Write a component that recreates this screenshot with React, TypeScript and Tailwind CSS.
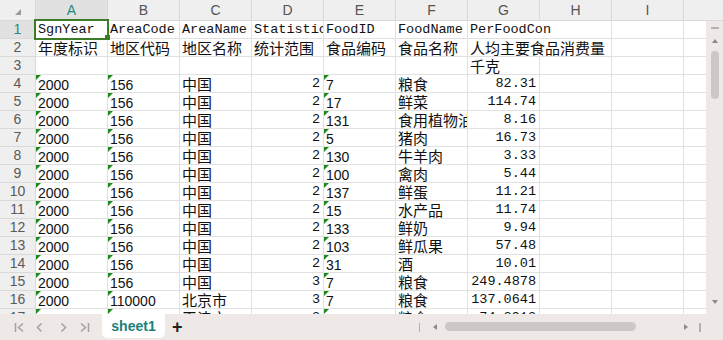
import React from 'react';

type K = 'm' | 's' | 'c';
type C = { t?: string; k?: K; r?: boolean; tri?: boolean; ov?: boolean };

const MONO = "font-['Liberation_Mono',monospace] text-[13.5px] pt-[1px]";
const SANS = "font-['Liberation_Sans',sans-serif] text-[14px] pt-[3px]";
const CJK = "font-['Noto_Sans_CJK_SC',sans-serif] text-[15px] pt-[1px]";

const fontOf = (k?: K) => (k === 'm' ? MONO : k === 's' ? SANS : CJK);

const m = (t: string, ov = false): C => ({ t, k: 'm', ov });
const c = (t: string, ov = false): C => ({ t, k: 'c', ov });
const s = (t: string): C => ({ t, k: 's', tri: true });
const d = (t: string): C => ({ t, k: 'm', r: true });

const dataRow = (
  a: string,
  b: string,
  cn: string,
  dd: string,
  e: string,
  f: string,
  g: string
): C[] => [s(a), s(b), c(cn), d(dd), s(e), c(f), d(g)];

const rows: C[][] = [
  [m('SgnYear'), m('AreaCode'), m('AreaName'), m('Statistic'), m('FoodID'), m('FoodName'), m('PerFoodCon', true)],
  [c('年度标识'), c('地区代码'), c('地区名称'), c('统计范围'), c('食品编码'), c('食品名称'), c('人均主要食品消费量', true)],
  [{}, {}, {}, {}, {}, {}, c('千克')],
  dataRow('2000', '156', '中国', '2', '7', '粮食', '82.31'),
  dataRow('2000', '156', '中国', '2', '17', '鲜菜', '114.74'),
  dataRow('2000', '156', '中国', '2', '131', '食用植物油', '8.16'),
  dataRow('2000', '156', '中国', '2', '5', '猪肉', '16.73'),
  dataRow('2000', '156', '中国', '2', '130', '牛羊肉', '3.33'),
  dataRow('2000', '156', '中国', '2', '100', '禽肉', '5.44'),
  dataRow('2000', '156', '中国', '2', '137', '鲜蛋', '11.21'),
  dataRow('2000', '156', '中国', '2', '15', '水产品', '11.74'),
  dataRow('2000', '156', '中国', '2', '133', '鲜奶', '9.94'),
  dataRow('2000', '156', '中国', '2', '103', '鲜瓜果', '57.48'),
  dataRow('2000', '156', '中国', '2', '31', '酒', '10.01'),
  dataRow('2000', '156', '中国', '3', '7', '粮食', '249.4878'),
  dataRow('2000', '110000', '北京市', '3', '7', '粮食', '137.0641'),
  dataRow('2000', '120000', '天津市', '3', '7', '粮食', '74.2912'),
];

const COLS = ['A', 'B', 'C', 'D', 'E', 'F', 'G', 'H', 'I'];

function Cell({ cell }: { cell: C }) {
  const ov = cell.ov;
  return (
    <div
      className={
        'relative h-[18px] w-[72px] shrink-0 border-b border-[#e1e1e1] ' +
        (ov ? 'z-10 overflow-visible border-r border-r-transparent' : 'overflow-hidden border-r')
      }
    >
      {cell.tri && (
        <span className="absolute left-0 top-0 h-0 w-0 border-r-[5px] border-t-[5px] border-r-transparent border-t-[#1e8a1e]" />
      )}
      {cell.t && (
        <div
          className={
            'absolute inset-y-0 flex items-center whitespace-nowrap leading-[18px] text-[#111] ' +
            fontOf(cell.k) +
            (cell.r ? ' right-[3px] justify-end' : ' left-[2px]')
          }
        >
          {cell.t}
        </div>
      )}
    </div>
  );
}

function Tri({ dir }: { dir: 'up' | 'down' | 'left' | 'right' }) {
  const pts =
    dir === 'up'
      ? '0,5 3,1 6,5'
      : dir === 'down'
      ? '0,1 6,1 3,5'
      : dir === 'left'
      ? '5,0 5,6 1,3'
      : '1,0 1,6 5,3';
  return (
    <svg width="6" height="6" viewBox="0 0 6 6">
      <polygon points={pts} fill="#8a8a8a" />
    </svg>
  );
}

function Chev({ kind }: { kind: 'first' | 'prev' | 'next' | 'last' }) {
  return (
    <svg width="11" height="11" viewBox="0 0 11 11" fill="none" stroke="#a3a3a3" strokeWidth="1.6">
      {kind === 'first' && (
        <>
          <path d="M1.5 1v9" />
          <path d="M9 1.5L4.5 5.5L9 9.5" />
        </>
      )}
      {kind === 'prev' && <path d="M7.5 1.5L3.5 5.5L7.5 9.5" />}
      {kind === 'next' && <path d="M3.5 1.5L7.5 5.5L3.5 9.5" />}
      {kind === 'last' && (
        <>
          <path d="M2 1.5L6.5 5.5L2 9.5" />
          <path d="M9.5 1v9" />
        </>
      )}
    </svg>
  );
}

export default function App() {
  return (
    <div className="relative flex h-[340px] w-[723px] flex-col overflow-hidden bg-white font-['Liberation_Sans',sans-serif]">
      {/* Column header */}
      <div className="flex h-[21px] shrink-0 border-b border-[#d9d9d9] bg-[#efefef]">
        <div className="relative h-full w-[36px] shrink-0 border-r border-[#d9d9d9]">
          <svg className="absolute left-[15px] top-[9px]" width="6" height="6" viewBox="0 0 6 6">
            <polygon points="6,0 6,6 0,6" fill="#9a9a9a" />
          </svg>
        </div>
        {COLS.map((col) => (
          <div
            key={col}
            className={
              'flex h-full w-[72px] shrink-0 items-center justify-center border-r border-[#d9d9d9] text-[14px] ' +
              (col === 'A' ? 'bg-[#e1e1e1] text-[#1f8a7c]' : 'text-[#555]')
            }
          >
            {col}
          </div>
        ))}
        <div className="flex-1" />
      </div>

      {/* Body */}
      <div className="flex h-[293px] shrink-0">
        <div className="w-[706px] shrink-0 overflow-hidden">
          {rows.map((row, i) => (
            <div key={i} className="flex">
              <div
                className={
                  'flex h-[18px] w-[36px] shrink-0 items-center justify-center border-b border-r border-[#d9d9d9] text-[14px] ' +
                  (i === 0 ? 'bg-[#e1e1e1] text-[#1f8a7c]' : 'bg-[#efefef] text-[#5a5a5a]')
                }
              >
                {i + 1}
              </div>
              {COLS.map((col, j) => (
                <Cell key={col} cell={row[j] ?? {}} />
              ))}
              <div className="h-[18px] flex-1 border-b border-[#e1e1e1]" />
            </div>
          ))}
        </div>
        {/* vertical scrollbar */}
        <div className="flex w-[17px] shrink-0 flex-col items-center bg-[#eee8e6]">
          <div className="mt-[6px] h-[2px] w-[8px] bg-[#b8b3b1]" />
          <div className="mt-[9px]">
            <Tri dir="up" />
          </div>
          <div className="mt-[7px] h-[48px] w-[8px] rounded-full bg-[#cdc7c5]" />
          <div className="flex-1" />
          <div className="mb-[9px]">
            <Tri dir="down" />
          </div>
        </div>
      </div>

      {/* Bottom bar */}
      <div className="flex h-[26px] shrink-0 items-start bg-[#eee8e6]">
        <div className="ml-[14px] mt-[8px] flex items-center">
          <Chev kind="first" />
          <span className="ml-[9px]">
            <Chev kind="prev" />
          </span>
          <span className="ml-[13px]">
            <Chev kind="next" />
          </span>
          <span className="ml-[10px]">
            <Chev kind="last" />
          </span>
        </div>
        <div className="ml-[12px] flex h-[24px] w-[63px] shrink-0 items-center justify-center rounded-b-[5px] bg-white text-[14px] font-bold text-[#1a7f7a]">
          sheet1
        </div>
        <div className="ml-[7px] mt-[4px] text-[18px] font-bold leading-[18px] text-[#222]">+</div>
        <div className="ml-[236px] mt-[9px] h-[9px] w-[1.5px] bg-[#b5b0ae]" />
        <div className="ml-[12px] mt-[10px]">
          <Tri dir="left" />
        </div>
        <div className="ml-[7px] mt-[8px] h-[9px] w-[191px] rounded-full bg-[#cdc7c5]" />
        <div className="ml-[47px] mt-[10px]">
          <Tri dir="right" />
        </div>
        <div className="ml-[10px] mt-[9px] h-[9px] w-[1.5px] bg-[#b5b0ae]" />
      </div>

      {/* selection overlay on A1 */}
      <div className="pointer-events-none absolute left-[34px] top-[19px] z-20 h-[21px] w-[75px] border-2 border-[#3b7d26]" />
      <div className="pointer-events-none absolute left-[105px] top-[35px] z-20 h-[5px] w-[5px] bg-[#3b7d26]" />
    </div>
  );
}
